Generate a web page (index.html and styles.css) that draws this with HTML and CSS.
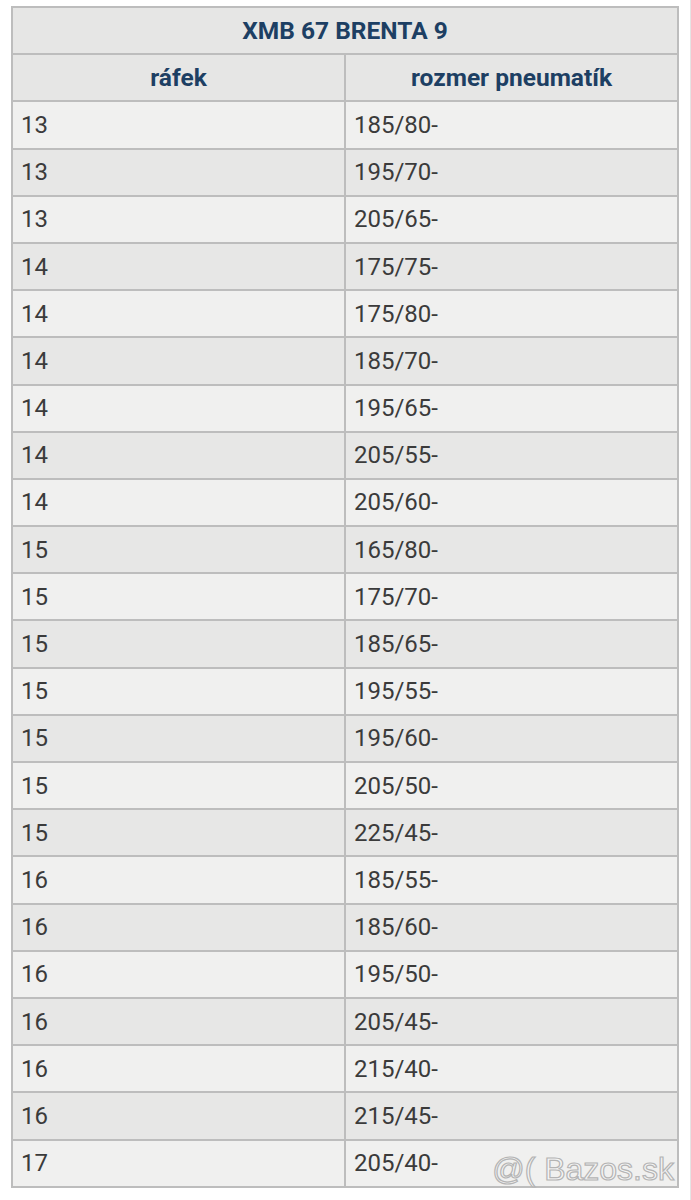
FILE: index.html
```html
<!DOCTYPE html>
<html lang="sk">
<head>
<meta charset="utf-8">
<title>XMB 67 BRENTA 9</title>
<link rel="stylesheet" href="styles.css">
</head>
<body>
<div class="page">
  <table class="sizes">
    <thead>
      <tr><th colspan="2" class="title">XMB 67 BRENTA 9</th></tr>
      <tr><th>ráfek</th><th>rozmer pneumatík</th></tr>
    </thead>
    <tbody>
      <tr><td>13</td><td>185/80-</td></tr>
      <tr><td>13</td><td>195/70-</td></tr>
      <tr><td>13</td><td>205/65-</td></tr>
      <tr><td>14</td><td>175/75-</td></tr>
      <tr><td>14</td><td>175/80-</td></tr>
      <tr><td>14</td><td>185/70-</td></tr>
      <tr><td>14</td><td>195/65-</td></tr>
      <tr><td>14</td><td>205/55-</td></tr>
      <tr><td>14</td><td>205/60-</td></tr>
      <tr><td>15</td><td>165/80-</td></tr>
      <tr><td>15</td><td>175/70-</td></tr>
      <tr><td>15</td><td>185/65-</td></tr>
      <tr><td>15</td><td>195/55-</td></tr>
      <tr><td>15</td><td>195/60-</td></tr>
      <tr><td>15</td><td>205/50-</td></tr>
      <tr><td>15</td><td>225/45-</td></tr>
      <tr><td>16</td><td>185/55-</td></tr>
      <tr><td>16</td><td>185/60-</td></tr>
      <tr><td>16</td><td>195/50-</td></tr>
      <tr><td>16</td><td>205/45-</td></tr>
      <tr><td>16</td><td>215/40-</td></tr>
      <tr><td>16</td><td>215/45-</td></tr>
      <tr><td>17</td><td>205/40-</td></tr>
    </tbody>
  </table>
  <div class="watermark">@( Bazos.sk</div>
</div>
</body>
</html>
```

FILE: styles.css
```css
html, body {
  margin: 0;
  padding: 0;
  background: #ffffff;
}

.page {
  position: relative;
  width: 691px;
  height: 1200px;
  box-sizing: border-box;
  padding: 6px 0 0 11px;
  border-right: 1px solid #e4e4e4;
}

.sizes {
  width: 668px;
  border-collapse: separate;
  border-spacing: 2px;
  background: #bdbdbd;
  table-layout: fixed;
  font-family: Roboto, "Noto Sans", sans-serif;
}

.sizes th,
.sizes td {
  height: 45.2px;
  padding: 0 8px;
  box-sizing: border-box;
  vertical-align: middle;
}

.sizes th {
  background: #e6e6e5;
  color: #1d3f63;
  font-size: 24.5px;
  font-weight: 700;
  text-align: center;
}

.sizes td {
  font-size: 24px;
  color: #3b3b3b;
  text-align: left;
  background: #f0f0ef;
}

.sizes tbody tr:nth-child(even) td {
  background: #e7e7e6;
}

.watermark {
  position: absolute;
  right: 16px;
  bottom: 12px;
  font-family: "Liberation Sans", Arial, sans-serif;
  font-size: 32px;
  color: rgba(255, 255, 255, 0.35);
  -webkit-text-stroke: 1.2px #b4b4b4;
}
```
